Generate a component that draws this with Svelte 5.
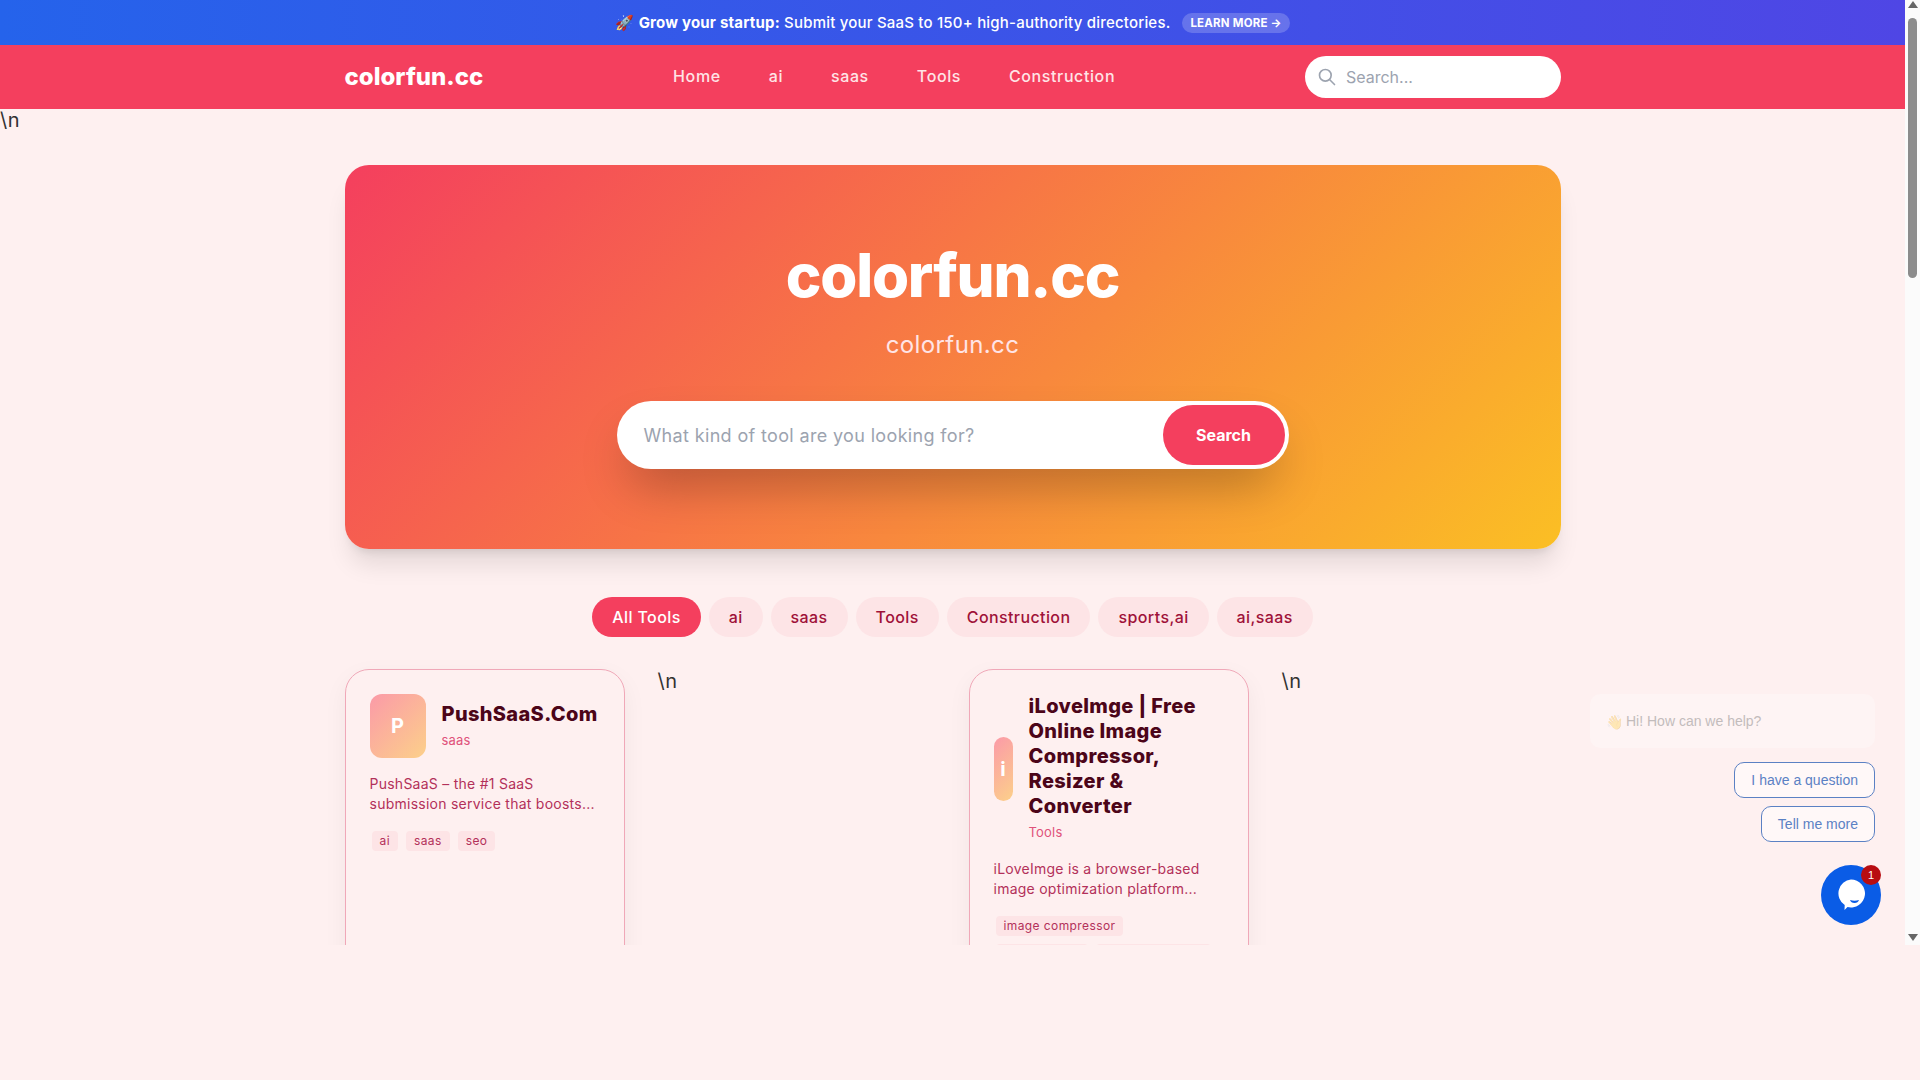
<script>
  const navLinks = ['Home', 'ai', 'saas', 'Tools', 'Construction'];
  const filters = ['All Tools', 'ai', 'saas', 'Tools', 'Construction', 'sports,ai', 'ai,saas'];
  const cards = [
    {
      initial: 'P',
      name: 'PushSaaS.Com',
      category: 'saas',
      desc: 'PushSaaS – the #1 SaaS submission service that boosts...',
      tags: ['ai', 'saas', 'seo']
    },
    {
      initial: 'i',
      name: 'iLoveImge | Free Online Image Compressor, Resizer & Converter',
      category: 'Tools',
      desc: 'iLoveImge is a browser-based image optimization platform...',
      tags: ['image compressor', 'resize image', 'image converter']
    }
  ];
</script>

<div class="window">
  <div class="page">
    <div class="banner">
      <span class="promo">🚀 <b>Grow your startup:</b> Submit your SaaS to 150+ high-authority directories.</span>
      <span class="learn">LEARN MORE →</span>
    </div>

    <nav class="nav">
      <div class="nav-inner">
        <span class="logo">colorfun.cc</span>
        <div class="links">
          {#each navLinks as link}
            <span>{link}</span>
          {/each}
        </div>
        <div class="nav-search">
          <svg viewBox="0 0 24 24" width="20" height="20" fill="none" stroke="#9ca3af" stroke-width="2" stroke-linecap="round">
            <circle cx="10" cy="10" r="7" />
            <path d="m15 15 6 6" />
          </svg>
          <span class="nav-placeholder">Search...</span>
        </div>
      </div>
    </nav>

    <div class="stray">\n</div>

    <main class="main">
      <section class="hero">
        <h1>colorfun.cc</h1>
        <p>colorfun.cc</p>
        <div class="hero-search">
          <span class="placeholder">What kind of tool are you looking for?</span>
          <span class="go">Search</span>
        </div>
      </section>

      <div class="filters">
        {#each filters as f, i}
          <span class="filter" class:active={i === 0}>{f}</span>
        {/each}
      </div>

      <div class="grid">
        {#each cards as card}
          <article class="card">
            <div class="head">
              <div class="avatar">{card.initial}</div>
              <div class="titles">
                <h3>{card.name}</h3>
                <span class="cat">{card.category}</span>
              </div>
            </div>
            <p class="desc">{card.desc}</p>
            <div class="tags">
              {#each card.tags as tag}
                <span class="tag">{tag}</span>
              {/each}
            </div>
          </article>
          <div class="stray-cell">\n</div>
        {/each}
      </div>
    </main>

    <div class="chat">
      <div class="bubble"><span class="wave">👋</span> Hi! How can we help?</div>
      <button class="reply">I have a question</button>
      <button class="reply">Tell me more</button>
      <div class="launcher">
        <svg viewBox="0 0 32 32" width="32" height="32">
          <path d="M16 .500a14 14 0 1 1-3.500 27.560L9.500 31l.2-4.900A14 14 0 0 1 16 .500z" fill="#fff" />
          <path d="M15 21q4.500 1.400 9 0q-1 3-4.500 3T15 21z" fill="#0a5ce6" />
        </svg>
        <span class="badge">1</span>
      </div>
    </div>
  </div>

  <div class="scrollbar">
    <span class="arrow up"></span>
    <span class="thumb"></span>
    <span class="arrow down"></span>
  </div>
</div>

<style>
  :global(body) {
    background: #fef0f0;
    font-family: Inter, "Open Sans", sans-serif;
    color: #4c0519;
  }

  .window {
    display: flex;
    height: 945px;
    overflow: hidden;
  }

  .page {
    position: relative;
    flex: 1;
    min-width: 0;
    overflow: hidden;
  }

  .banner {
    height: 45px;
    display: flex;
    align-items: center;
    justify-content: center;
    gap: 12px;
    background: linear-gradient(90deg, #2563eb, #4f46e5);
    color: #fff;
    font-size: 15px;
    font-weight: 500;
    letter-spacing: .2px;
  }

  .promo b { font-weight: 700; }

  .learn {
    padding: 2px 8px;
    border-radius: 999px;
    background: rgba(255, 255, 255, .2);
    font-size: 11.500px;
    font-weight: 700;
    line-height: 16px;
    letter-spacing: .2px;
  }

  .nav { height: 64px; background: #f43f5e; }

  .nav-inner {
    width: 1216px;
    height: 100%;
    margin: 0 auto;
    display: flex;
    align-items: center;
    justify-content: space-between;
  }

  .logo { margin-bottom: 2px; color: #fff; font-size: 24px; font-weight: 800; }

  .links {
    margin-bottom: 2px;
    display: flex;
    gap: 48px;
    color: #ffe4e6;
    font-size: 16px;
    font-weight: 500;
    letter-spacing: .6px;
  }

  .nav-search {
    width: 256px;
    height: 42px;
    box-sizing: border-box;
    margin-right: -.5px;
    padding-left: 12px;
    display: flex;
    align-items: center;
    gap: 9px;
    border-radius: 999px;
    background: #fff;
    color: #9ca3af;
    font-size: 16px;
  }

  .nav-placeholder { padding-bottom: 1px; }

  .stray, .stray-cell {
    color: #333;
    font-size: 20px;
    line-height: 24px;
    letter-spacing: .6px;
  }

  .stray { height: 24px; margin-top: -1px; margin-bottom: 1px; }
  .stray-cell { margin-left: 1px; }

  .main { width: 1216px; margin: 0 auto; padding-top: 32px; }

  .hero {
    height: 384px;
    box-sizing: border-box;
    padding-top: 80px;
    display: flex;
    flex-direction: column;
    align-items: center;
    border-radius: 24px;
    background: linear-gradient(135deg, #f43f5e, #fbbf24);
    box-shadow: 0 20px 25px -5px rgba(0, 0, 0, .1), 0 8px 10px -6px rgba(0, 0, 0, .1);
    color: #fff;
  }

  h1 {
    margin: 0;
    font-size: 60px;
    line-height: 60px;
    font-weight: 800;
    letter-spacing: -1.200px;
  }

  .hero p {
    margin: 24px 0 0;
    color: #ffe4e6;
    font-size: 24px;
    line-height: 32px;
    letter-spacing: .4px;
  }

  .hero-search {
    width: 672px;
    height: 68px;
    margin-top: 40px;
    box-sizing: border-box;
    padding: 4px 4px 4px 27px;
    display: flex;
    align-items: center;
    justify-content: space-between;
    border-radius: 999px;
    background: #fff;
    box-shadow: 0 25px 50px -12px rgba(0, 0, 0, .3);
  }

  .placeholder { color: #9ca3af; font-size: 18px; letter-spacing: .35px; }

  .go {
    width: 122px;
    height: 60px;
    display: flex;
    align-items: center;
    justify-content: center;
    border-radius: 999px;
    background: #f43f5e;
    color: #fff;
    font-size: 16px;
    font-weight: 700;
  }

  .filters {
    margin-top: 48px;
    display: flex;
    justify-content: center;
    gap: 8px;
  }

  .filter {
    height: 40px;
    padding: 0 20px 1px;
    box-sizing: border-box;
    display: flex;
    align-items: center;
    border-radius: 999px;
    background: #fde4e6;
    color: #9f1239;
    font-size: 16px;
    font-weight: 500;
    letter-spacing: .4px;
  }

  .filter.active { background: #f43f5e; color: #fff; }

  .grid {
    margin-top: 32px;
    display: grid;
    grid-template-columns: repeat(4, 280px);
    gap: 32px;
  }

  .card {
    min-height: 320px;
    box-sizing: border-box;
    padding: 24px;
    border: 1px solid #f0a8b8;
    border-radius: 24px;
    box-shadow: 0 8px 24px rgba(0, 0, 0, .05);
  }

  .head { display: flex; align-items: center; gap: 16px; }

  .avatar {
    flex: 0 1 56px;
    width: 56px;
    height: 64px;
    min-width: 0;
    display: flex;
    align-items: center;
    justify-content: center;
    border-radius: 12px;
    background: linear-gradient(135deg, #fb9aa8, #fcd08a);
    color: #fff;
    font-size: 20px;
    font-weight: 700;
  }

  .titles { min-width: 0; flex-shrink: 0; max-width: 195px; }

  h3 {
    margin: 0;
    color: #4c0519;
    font-size: 20px;
    line-height: 25px;
    font-weight: 800;
    letter-spacing: .35px;
  }

  .cat {
    display: block;
    margin-top: 3px;
    padding-bottom: 1px;
    color: #e0527a;
    font-size: 13px;
    line-height: 20px;
    letter-spacing: .2px;
  }

  .desc {
    margin: 16px 0 0;
    color: #b3305a;
    font-size: 14px;
    line-height: 20px;
    letter-spacing: .25px;
  }

  .tags {
    margin-top: 17px;
    padding: 0 12px 0 2px;
    display: flex;
    flex-wrap: wrap;
    gap: 8px;
  }

  .tag {
    padding: 2px 8px;
    border-radius: 4px;
    background: #fde4e6;
    color: #b3305a;
    font-size: 12px;
    line-height: 16px;
    letter-spacing: .4px;
  }

  .chat {
    position: absolute;
    right: 30px;
    bottom: 20px;
    width: 285px;
    display: flex;
    flex-direction: column;
    align-items: flex-end;
    font-family: "Liberation Sans", sans-serif;
  }

  .bubble {
    width: 100%;
    height: 54px;
    box-sizing: border-box;
    margin-bottom: 14px;
    padding-left: 16px;
    display: flex;
    align-items: center;
    gap: 3px;
    border-radius: 10px;
    background: rgba(255, 255, 255, .25);
    color: #c3bcbc;
    font-size: 14px;
  }

  .wave { opacity: .3; font-family: "Noto Sans", sans-serif; }

  .reply {
    height: 36px;
    margin-bottom: 8px;
    padding: 0 16px;
    border: 1px solid #5b81c4;
    border-radius: 10px;
    background: rgba(255, 255, 255, .5);
    color: #5b81c4;
    font: 14px "Liberation Sans", sans-serif;
  }

  .launcher {
    position: relative;
    width: 60px;
    height: 60px;
    margin: 15px -6px 0 0;
    display: flex;
    align-items: center;
    justify-content: center;
    border-radius: 50%;
    background: #0a5ce6;
  }

  .badge {
    position: absolute;
    top: 0;
    right: 0;
    width: 20px;
    height: 20px;
    border-radius: 50%;
    background: #b80d12;
    color: #fff;
    font-size: 11px;
    line-height: 20px;
    text-align: center;
  }

  .scrollbar {
    flex: 0 0 15px;
    display: flex;
    flex-direction: column;
    align-items: center;
    background: #fbfbfb;
  }

  .thumb {
    width: 9px;
    height: 260px;
    margin-top: 10px;
    border-radius: 5px;
    background: #8c8c8c;
  }

  .arrow { width: 0; height: 0; border: 5px solid transparent; }
  .arrow.up { margin-top: 1px; border-top: 0; border-bottom: 7px solid #666; }
  .arrow.down { margin-top: auto; margin-bottom: 4px; border-bottom: 0; border-top: 7px solid #666; }
</style>
